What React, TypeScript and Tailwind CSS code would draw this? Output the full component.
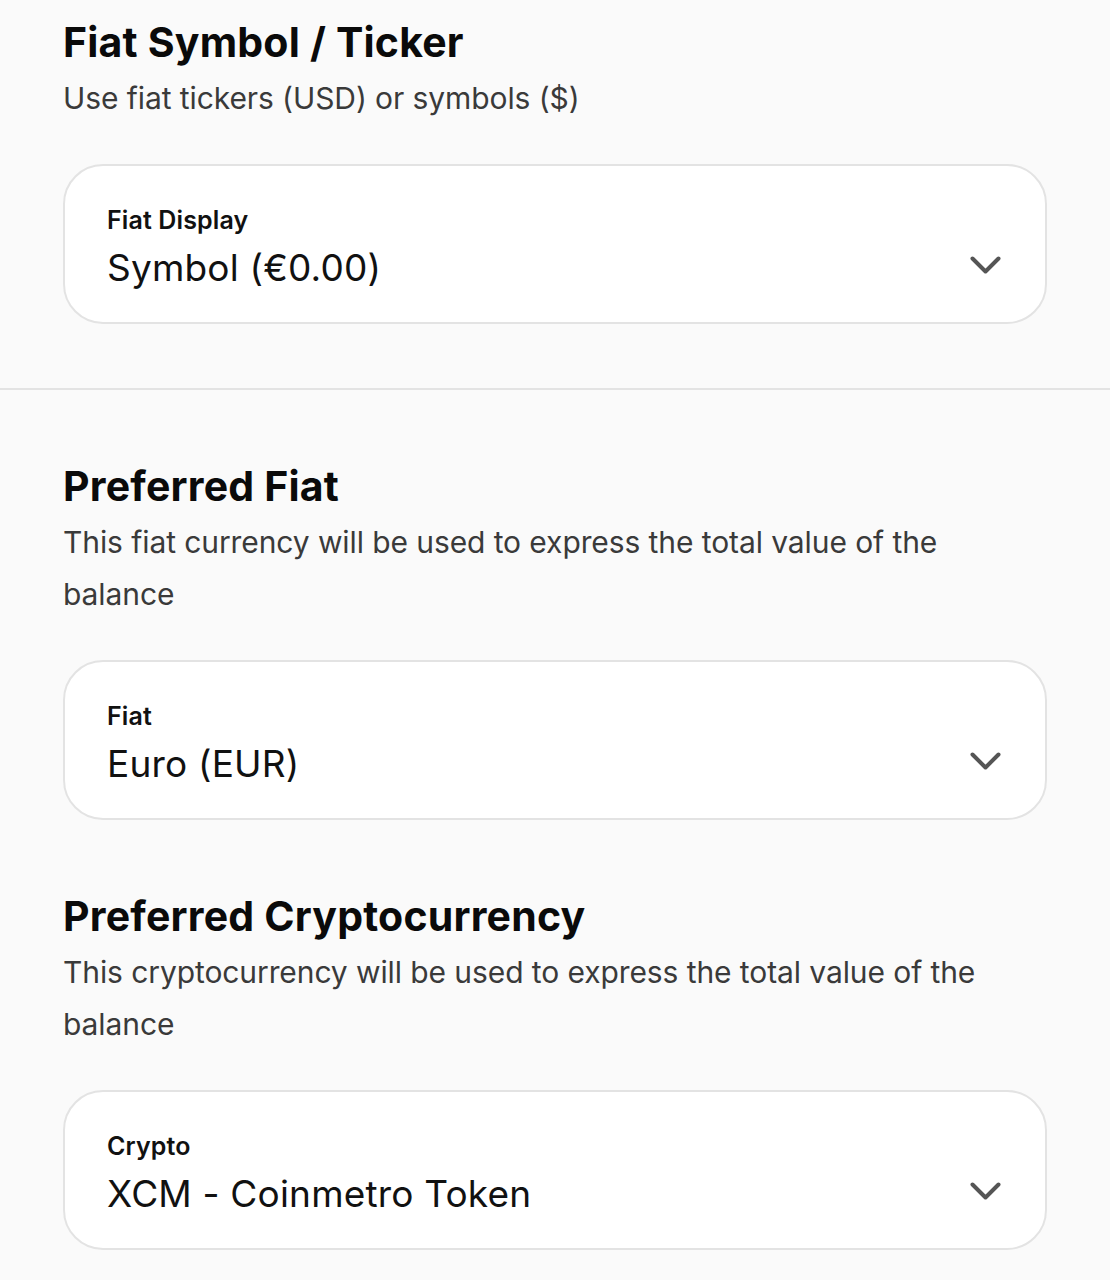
const SECTION_FONT = { fontFamily: "Inter, 'Noto Sans', sans-serif" };

function Chevron() {
  return (
    <svg width="31" height="19" viewBox="0 0 31 19" fill="none" className="shrink-0 -mt-[6px]">
      <path d="M2.5 2.5l13 13 13-13" stroke="#555" strokeWidth="4" strokeLinecap="round" strokeLinejoin="round" />
    </svg>
  );
}

function SelectCard({ label, value }: { label: string; value: string }) {
  return (
    <div className="flex flex-col justify-center h-[160px] rounded-[40px] border-2 border-[#e3e3e3] bg-white pl-[42px] pr-[44px] pt-[6px]">
      <span className="text-[25px] font-semibold text-[#111] tracking-[0.005em] leading-[36px]">{label}</span>
      <div className="flex items-center justify-between mt-[6px]">
        <span className="text-[37px] text-[#111] tracking-[0.005em] leading-[48px]">{value}</span>
        <Chevron />
      </div>
    </div>
  );
}

function Heading({ title, desc }: { title: string; desc: string }) {
  return (
    <div className="flex flex-col">
      <h2 className="text-[41px] font-bold text-[#0a0a0a] tracking-[0.005em] leading-[52px]">{title}</h2>
      <p className="mt-[4px] text-[30px] text-[#3a3a3a] tracking-[-0.003em] leading-[52px]">{desc}</p>
    </div>
  );
}

export default function App() {
  return (
    <div className="min-h-[1280px] w-[1110px] bg-[#fafafa] overflow-hidden" style={SECTION_FONT}>
      <div className="px-[63px] pt-[16px] pb-[64px]">
        <Heading title="Fiat Symbol / Ticker" desc="Use fiat tickers (USD) or symbols ($)" />
        <div className="mt-[40px] w-[984px]">
          <SelectCard label="Fiat Display" value="Symbol (€0.00)" />
        </div>
      </div>
      <div className="h-[2px] bg-[#e3e3e3]" />
      <div className="px-[63px] pt-[70px]">
        <Heading title="Preferred Fiat" desc="This fiat currency will be used to express the total value of the balance" />
        <div className="mt-[40px] w-[984px]">
          <SelectCard label="Fiat" value="Euro (EUR)" />
        </div>
        <div className="mt-[70px]">
          <Heading title="Preferred Cryptocurrency" desc="This cryptocurrency will be used to express the total value of the balance" />
        </div>
        <div className="mt-[40px] w-[984px]">
          <SelectCard label="Crypto" value="XCM - Coinmetro Token" />
        </div>
      </div>
    </div>
  );
}
